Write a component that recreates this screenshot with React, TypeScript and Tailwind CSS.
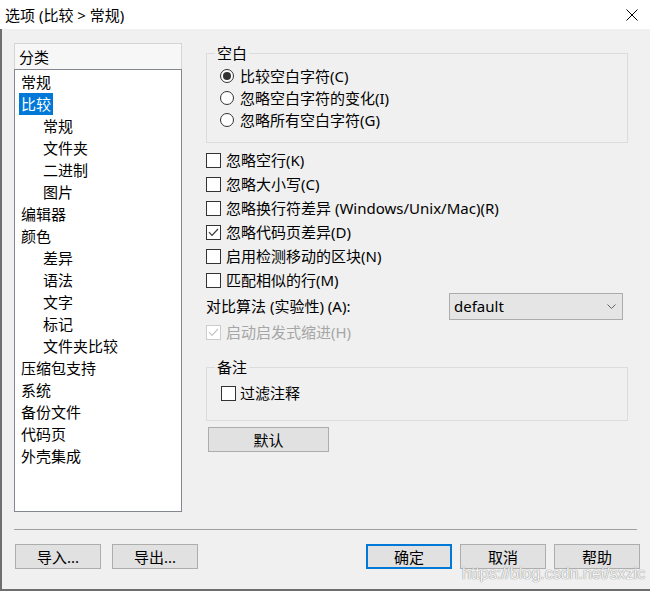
import React from 'react';
import clsx from 'clsx';

interface CheckProps {
  checked?: boolean;
  disabled?: boolean;
}

const CheckBox: React.FC<CheckProps> = ({ checked, disabled }) => (
  <span
    className={clsx(
      'w-[15px] h-[15px] border bg-white flex items-center justify-center shrink-0',
      disabled ? 'border-[#cccccc]' : 'border-[#333333]'
    )}
  >
    {checked && (
      <svg width="11" height="9" viewBox="0 0 11 9">
        <path
          d="M1 4.2 L4 7.4 L10 1"
          fill="none"
          stroke={disabled ? '#c4c4c4' : '#333333'}
          strokeWidth="1.1"
        />
      </svg>
    )}
  </span>
);

const Radio: React.FC<{ checked?: boolean }> = ({ checked }) => (
  <span className="w-[14px] h-[14px] rounded-full border border-[#333333] bg-white flex items-center justify-center shrink-0">
    {checked && <span className="w-[8px] h-[8px] rounded-full bg-[#333333]" />}
  </span>
);

const CheckRow: React.FC<{ label: string; checked?: boolean; disabled?: boolean }> = ({
  label,
  checked,
  disabled,
}) => (
  <div className="flex items-center h-[24px] gap-[5px]">
    <CheckBox checked={checked} disabled={disabled} />
    <span className={clsx('leading-[18px]', disabled && 'text-[#a6a6a6]')}>{label}</span>
  </div>
);

const Button: React.FC<{ label: string; primary?: boolean; className?: string }> = ({
  label,
  primary,
  className,
}) => (
  <div
    className={clsx(
      'h-[25px] shrink-0 flex items-center justify-center bg-[#e1e1e1] leading-[18px]',
      primary ? 'border-2 border-[#0078d7]' : 'border border-[#adadad]',
      className
    )}
  >
    {label}
  </div>
);

const categories: { label: string; sub?: boolean; selected?: boolean }[] = [
  { label: '常规' },
  { label: '比较', selected: true },
  { label: '常规', sub: true },
  { label: '文件夹', sub: true },
  { label: '二进制', sub: true },
  { label: '图片', sub: true },
  { label: '编辑器' },
  { label: '颜色' },
  { label: '差异', sub: true },
  { label: '语法', sub: true },
  { label: '文字', sub: true },
  { label: '标记', sub: true },
  { label: '文件夹比较', sub: true },
  { label: '压缩包支持' },
  { label: '系统' },
  { label: '备份文件' },
  { label: '代码页' },
  { label: '外壳集成' },
];

const App: React.FC = () => {
  return (
    <div className="relative w-[650px] h-[591px] flex flex-col overflow-hidden bg-[#f0f0f0] text-black text-[15px] font-['Noto_Sans','Noto_Sans_CJK_SC',sans-serif]">
      {/* title bar */}
      <div className="h-[29px] shrink-0 bg-white flex items-center justify-between pl-[5px] pr-[12px]">
        <span className="leading-[18px]">选项 (比较 &gt; 常规)</span>
        <svg width="12" height="12" viewBox="0 0 12 12">
          <path d="M0.5 0.5 L11.5 11.5 M11.5 0.5 L0.5 11.5" stroke="#000" strokeWidth="1" />
        </svg>
      </div>

      <div className="flex-1 flex flex-col border-l-2 border-b-2 border-[#6e6e6e] pl-[12px] pt-[14px] pr-[13px]">
        <div className="flex gap-[24px] h-[469px]">
          {/* category tree */}
          <div className="w-[168px] flex flex-col shrink-0">
            <div className="h-[26px] border border-b-0 border-[#d4d4d4] bg-[#f7f7f7] flex items-center pl-[4px]">
              <span className="leading-[18px]">分类</span>
            </div>
            <div className="flex-1 border border-[#828790] bg-white pt-[1px] pl-[4px]">
              {categories.map((c, i) => (
                <div key={i} className={clsx('h-[22px] flex items-center', c.sub && 'pl-[22px]')}>
                  <span
                    className={clsx(
                      'h-[22px] px-[2px] flex items-center leading-[18px]',
                      c.selected && 'bg-[#0078d7] text-white'
                    )}
                  >
                    {c.label}
                  </span>
                </div>
              ))}
            </div>
          </div>

          {/* options */}
          <div className="w-[422px] mt-[2px] flex flex-col">
            <fieldset className="border border-[#dcdcdc] pl-[13px] pt-[4px] pb-[11px]">
              <legend className="ml-[-5px] px-[2px] leading-[16px]">空白</legend>
              {[
                { label: '比较空白字符(C)', checked: true },
                { label: '忽略空白字符的变化(I)' },
                { label: '忽略所有空白字符(G)' },
              ].map((r) => (
                <div key={r.label} className="flex items-center h-[22px] gap-[6px]">
                  <Radio checked={r.checked} />
                  <span className="leading-[18px]">{r.label}</span>
                </div>
              ))}
            </fieldset>

            <div className="mt-[5px] flex flex-col">
              <CheckRow label="忽略空行(K)" />
              <CheckRow label="忽略大小写(C)" />
              <CheckRow label="忽略换行符差异 (Windows/Unix/Mac)(R)" />
              <CheckRow label="忽略代码页差异(D)" checked />
              <CheckRow label="启用检测移动的区块(N)" />
              <CheckRow label="匹配相似的行(M)" />
              <div className="flex items-center h-[28px]">
                <span className="w-[243px] leading-[18px]">对比算法 (实验性) (A):</span>
                <div className="w-[174px] h-[27px] border border-[#acacac] bg-[#e5e5e5] flex items-center justify-between pl-[4px] pr-[6px]">
                  <span className="leading-[18px]">default</span>
                  <svg width="9" height="5" viewBox="0 0 9 5">
                    <path d="M0.5 0.5 L4.5 4.5 L8.5 0.5" fill="none" stroke="#606060" strokeWidth="1" />
                  </svg>
                </div>
              </div>
              <CheckRow label="启动启发式缩进(H)" checked disabled />
            </div>

            <fieldset className="mt-[15px] border border-[#dcdcdc] pl-[14px] pt-[6px] pb-[15px]">
              <legend className="ml-[-6px] px-[2px] leading-[16px]">备注</legend>
              <div className="flex items-center h-[24px] gap-[4px]">
                <CheckBox />
                <span className="leading-[18px]">过滤注释</span>
              </div>
            </fieldset>

            <Button label="默认" className="mt-[6px] ml-[2px] w-[121px]" />
          </div>
        </div>

        <div className="mt-[17px] h-px bg-[#a0a0a0]" />

        <div className="mt-[14px] flex items-center pl-[1px]">
          <Button label="导入..." className="w-[86px]" />
          <Button label="导出..." className="w-[86px] ml-[11px]" />
          <div className="flex-1" />
          <Button label="确定" primary className="w-[86px]" />
          <Button label="取消" className="w-[86px] ml-[8px]" />
          <Button label="帮助" className="w-[86px] ml-[8px] mr-[-3px]" />
        </div>
      </div>

      {/* watermark */}
      <span className="absolute left-[462px] top-[565px] text-[16px] leading-[18px] text-white/90 font-['Liberation_Sans',sans-serif] [text-shadow:0_0_1px_#8a8a8a,0_0_1px_#8a8a8a]">
        https://blog.csdn.net/sxzic
      </span>
    </div>
  );
};

export default App;
